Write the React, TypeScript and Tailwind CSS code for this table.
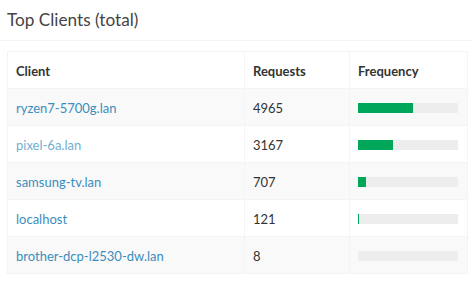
import React from 'react'

const CLIENTS = [
  { name: 'ryzen7-5700g.lan', count: 4965, pct: 55 },
  { name: 'pixel-6a.lan', count: 3167, pct: 35, muted: true },
  { name: 'samsung-tv.lan', count: 707, pct: 8 },
  { name: 'localhost', count: 121, pct: 1 },
  { name: 'brother-dcp-l2530-dw.lan', count: 8, pct: 0 },
]

export default function App() {
  return (
    <div
      className="w-[472px] h-[285px] bg-white text-[#333]"
      style={{ fontFamily: '"Source Sans Pro", Lato, sans-serif' }}
    >
      {/* box header */}
      <div className="h-[41px] border-b border-[#f4f4f4] px-[7px] flex items-center">
        <h3 className="text-[17.2px] leading-none text-[#444]">Top Clients (total)</h3>
      </div>

      {/* box body */}
      <div className="pt-[10px] pl-[7px]">
        <table className="w-[460px] border-collapse text-[13px] leading-[20px] table-fixed">
          <colgroup>
            <col className="w-[237px]" />
            <col className="w-[105px]" />
            <col className="w-[118px]" />
          </colgroup>
          <thead>
            <tr className="bg-white">
              <th className="border border-[#f4f4f4] px-2 pt-[9px] pb-[7px] text-left font-bold">Client</th>
              <th className="border border-[#f4f4f4] px-2 pt-[9px] pb-[7px] text-left font-bold">Requests</th>
              <th className="border border-[#f4f4f4] px-2 pt-[9px] pb-[7px] text-left font-bold">Frequency</th>
            </tr>
          </thead>
          <tbody>
            {CLIENTS.map((c, i) => (
              <tr key={c.name} className={i % 2 === 0 ? 'bg-[#f9f9f9]' : 'bg-white'}>
                <td className="border border-[#f4f4f4] px-2 pt-[9px] pb-[7px]">
                  <a className={c.muted ? 'text-[#72afd2]' : 'text-[#3c8dbc]'}>{c.name}</a>
                </td>
                <td className="border border-[#f4f4f4] px-2 pt-[9px] pb-[7px]">{c.count}</td>
                <td className="border border-[#f4f4f4] px-2 pt-[9px] pb-[7px]">
                  <div className="w-[100px] h-[10px] bg-[#ededed]">
                    <div className="h-full bg-[#00a65a]" style={{ width: `${c.pct}%` }} />
                  </div>
                </td>
              </tr>
            ))}
          </tbody>
        </table>
      </div>
    </div>
  )
}
